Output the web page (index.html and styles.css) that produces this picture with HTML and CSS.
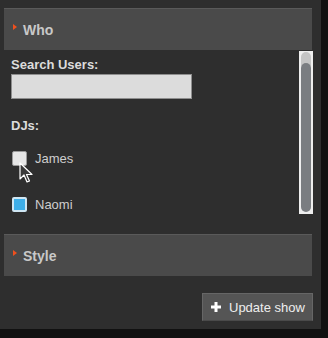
FILE: index.html
```html
<!DOCTYPE html>
<html lang="en">
<head>
    <meta charset="UTF-8">
    <title>Show editor</title>
    <link rel="stylesheet" href="styles.css">
</head>
<body>
    <div class="panel">
        <div class="section-head">
            <span class="arrow"></span>
            <span>Who</span>
        </div>

        <div class="who-body">
            <div class="who-content">
                <div class="field-label">Search Users:</div>
                <input type="text" class="search-box">

                <div class="field-label djs">DJs:</div>

                <label class="dj-row">
                    <span class="check"></span>
                    <span>James</span>
                    <svg class="cursor" width="14" height="22" viewBox="0 0 14 22">
                        <path d="M1 1 L1 17 L5 13 L8 20 L10.5 19 L7.5 12.5 L13 12.5 Z" fill="#3a3a3a" stroke="#fff" stroke-width="1.2" stroke-linejoin="round"/>
                    </svg>
                </label>
                <label class="dj-row">
                    <span class="check checked"></span>
                    <span>Naomi</span>
                </label>
            </div>
            <div class="scrollbar">
                <div class="scroll-cap"></div>
                <div class="scroll-thumb"></div>
            </div>
        </div>

        <div class="section-head">
            <span class="arrow"></span>
            <span>Style</span>
        </div>

        <div class="actions">
            <button class="update-btn">
                <svg width="10" height="10" viewBox="0 0 10 10">
                    <path d="M3.5 0 H6.5 V3.5 H10 V6.5 H6.5 V10 H3.5 V6.5 H0 V3.5 H3.5 Z" fill="#fff"/>
                </svg>
                Update show
            </button>
        </div>
    </div>
</body>
</html>
```

FILE: styles.css
```css
body {
    margin: 0;
    background-color: #111;
    font-family: "Liberation Sans", Arial, sans-serif;
}
.panel {
    width: 321px;
    height: 329px;
    background-color: #2e2e2e;
    box-sizing: border-box;
    padding-top: 8px;
}
.section-head {
    margin: 0 9px 0 4px;
    height: 42px;
    background-color: #4a4a4a;
    border-top: 1px solid #5a5a5a;
    box-sizing: border-box;
    display: flex;
    align-items: center;
    gap: 6px;
    padding-left: 9px;
    color: #c8c8c8;
    font-weight: bold;
    font-size: 14px;
}
.arrow {
    width: 0;
    height: 0;
    border-top: 3.5px solid transparent;
    border-bottom: 3.5px solid transparent;
    border-left: 4px solid #f0501e;
    margin-top: -6px;
}
.who-body {
    display: flex;
    height: 184px;
}
.who-content {
    flex: 1;
    padding: 7px 0 0 11px;
}
.field-label {
    color: #dcdcdc;
    font-weight: bold;
    font-size: 13px;
    line-height: 15px;
}
.search-box {
    display: block;
    width: 181px;
    height: 25px;
    box-sizing: border-box;
    margin-top: 2px;
    background-color: #dcdcdc;
    border: 1px solid #8e8e8e;
    padding: 0;
}
.djs {
    margin-top: 19px;
}
.dj-row {
    position: relative;
    display: flex;
    align-items: center;
    gap: 8px;
    color: #cfcfcf;
    font-size: 13px;
    margin-top: 17px;
    height: 16px;
}
.dj-row + .dj-row {
    margin-top: 30px;
}
.check {
    width: 15px;
    height: 15px;
    box-sizing: border-box;
    margin-left: 1px;
    background-color: #e6e6e6;
    border: 1px solid #9a9a9a;
    border-radius: 2px;
}
.check.checked {
    background-color: #3daee9;
    border: 2px solid #cfe6f3;
}
.cursor {
    position: absolute;
    left: 8px;
    top: 12px;
}
.scrollbar {
    width: 14px;
    height: 163px;
    margin: 1px 8px 0 0;
    box-sizing: border-box;
    background-color: #eeeeee;
    padding: 1px 2px 2px;
    display: flex;
    flex-direction: column;
}
.scroll-cap {
    height: 14px;
    background-color: #c4c4c4;
    border-radius: 5px 5px 0 0;
}
.scroll-thumb {
    flex: 1;
    margin-top: -3px;
    background-color: #7a7d81;
    border-radius: 5px;
}
.actions {
    display: flex;
    justify-content: flex-end;
    padding: 17px 8px 0 0;
}
.update-btn {
    width: 111px;
    height: 28px;
    background-color: #555;
    border: 1px solid #666;
    border-bottom-color: #4a4a4a;
    color: #eee;
    font-family: "Liberation Sans", Arial, sans-serif;
    font-size: 13px;
    display: flex;
    align-items: center;
    gap: 8px;
    padding: 0 0 0 8px;
}
```
